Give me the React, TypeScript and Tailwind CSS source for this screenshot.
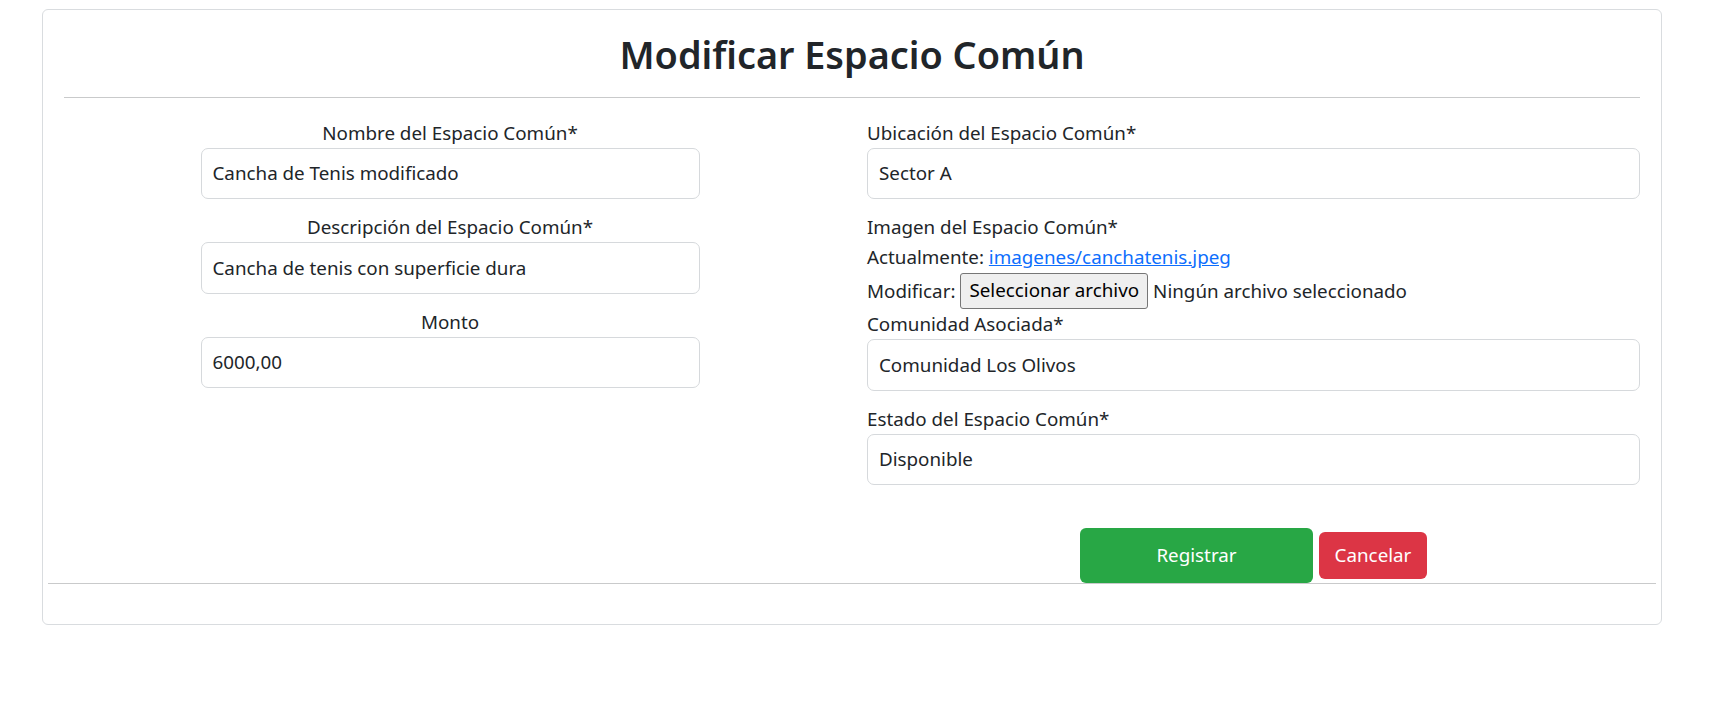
import React from 'react';

const font = { fontFamily: '"Noto Sans", "Open Sans", sans-serif' };

function TextField({ value, className = '' }: { value: string; className?: string }) {
  return (
    <div
      className={`h-[51.5px] w-full flex items-center border border-[#d6d9dc] rounded-[7px] bg-white pl-[11px] text-[18.8px] text-[#212529] ${className}`}
    >
      {value}
    </div>
  );
}

function CenterField({ label, value }: { label: string; value: string }) {
  return (
    <div className="w-[499px] flex flex-col items-center">
      <label className="text-[18.8px] leading-[30px] text-[#212529]">{label}</label>
      <TextField value={value} />
    </div>
  );
}

function SideField({ label, value }: { label: string; value: string }) {
  return (
    <div className="w-full flex flex-col">
      <label className="text-[18.8px] leading-[30px] text-[#212529]">{label}</label>
      <TextField value={value} />
    </div>
  );
}

export default function App() {
  return (
    <div className="min-h-screen bg-white pt-[9px] pl-[42px]" style={font}>
      <div className="w-[1620px] h-[616px] border border-[#d9dcdf] rounded-[6px] flex flex-col">
        <div className="px-[21px]">
          <h1 className="mt-[21px] text-center text-[37.8px] leading-[48px] font-semibold text-[#212529]">
            Modificar Espacio Común
          </h1>
          <div className="mt-[18px] h-px bg-[#c9cacb]" />

          <div className="mt-[19.5px] flex gap-[31px]">
            {/* left column */}
            <div className="w-[773px] flex flex-col items-center gap-[13px]">
              <CenterField label="Nombre del Espacio Común*" value="Cancha de Tenis modificado" />
              <CenterField label="Descripción del Espacio Común*" value="Cancha de tenis con superficie dura" />
              <CenterField label="Monto" value="6000,00" />
            </div>

            {/* right column */}
            <div className="w-[774px] flex flex-col">
              <SideField label="Ubicación del Espacio Común*" value="Sector A" />

              <div className="mt-[13px] text-[18.8px] leading-[30px] text-[#212529]">
                <div>Imagen del Espacio Común*</div>
                <div>
                  Actualmente:{' '}
                  <a href="#" className="text-[#0d6efd] underline">
                    imagenes/canchatenis.jpeg
                  </a>
                </div>
                <div className="flex items-center h-[37px]">
                  <span>Modificar:</span>
                  <button className="ml-[5px] h-[36px] px-[8px] bg-[#efefef] border border-[#767676] rounded-[3px] text-[18.8px] leading-none text-black">
                    Seleccionar archivo
                  </button>
                  <span className="ml-[5px]">Ningún archivo seleccionado</span>
                </div>
              </div>

              <SideField label="Comunidad Asociada*" value="Comunidad Los Olivos" />
              <div className="mt-[13px]">
                <SideField label="Estado del Espacio Común*" value="Disponible" />
              </div>

              <div className="mt-[43px] flex items-center justify-center gap-[6px]">
                <button className="w-[233px] h-[55px] bg-[#28a745] text-white text-[18.8px] rounded-[6px]">
                  Registrar
                </button>
                <button className="w-[108px] h-[47px] bg-[#dc3545] text-white text-[18.8px] rounded-[6px]">
                  Cancelar
                </button>
              </div>
            </div>
          </div>
        </div>
        <div className="mx-[5px] h-px bg-[#c9cacb]" />
      </div>
    </div>
  );
}
